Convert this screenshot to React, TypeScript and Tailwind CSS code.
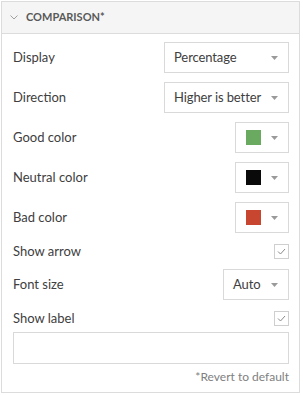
import React from 'react'

const font = { fontFamily: 'Lato, "Noto Sans", sans-serif' }

function Caret() {
  return (
    <svg width="7" height="4" viewBox="0 0 7 4" className="shrink-0">
      <path d="M0 0 L7 0 L3.5 4 Z" fill="#9a9a9a" />
    </svg>
  )
}

function Select({ value, width }: { value: string; width: string }) {
  return (
    <div className={`${width} h-[31px] flex items-center justify-between border border-[#d9d9d9] bg-white pl-[9px] pr-[10px]`}>
      <span className="text-[13px] tracking-[-0.1px] text-[#404040] whitespace-nowrap">{value}</span>
      <Caret />
    </div>
  )
}

function Swatch({ color }: { color: string }) {
  return (
    <div className="w-[54px] h-[31px] flex items-center justify-between border border-[#d9d9d9] bg-white pl-[10px] pr-[10px]">
      <span className={`w-[15px] h-[15px] ${color}`} />
      <Caret />
    </div>
  )
}

function Check() {
  return (
    <div className="w-[15px] h-[15px] border border-[#cfcfcf] bg-white flex items-center justify-center">
      <svg width="9" height="7" viewBox="0 0 9 7">
        <path d="M1 3.5 L3.5 6 L8 1" fill="none" stroke="#8a8a8a" strokeWidth="1" />
      </svg>
    </div>
  )
}

function Row({ label, children }: { label: string; children: React.ReactNode }) {
  return (
    <div className="flex items-center justify-between h-[31px]">
      <span className="text-[13px] text-[#404040]">{label}</span>
      {children}
    </div>
  )
}

function CheckRow({ label }: { label: string }) {
  return (
    <div className="flex items-center justify-between h-[17px]">
      <span className="text-[13px] text-[#404040]">{label}</span>
      <Check />
    </div>
  )
}

export default function App() {
  return (
    <div className="w-[303px] h-[395px] bg-white pt-px pl-px">
      <div className="w-[299px] h-[392px] border border-[#dcdcdc] flex flex-col" style={font}>
        <div className="h-[32px] bg-[#f5f5f5] border-b border-[#dcdcdc] flex items-center pl-[8px] gap-[8px]">
          <svg width="8" height="5" viewBox="0 0 8 5">
            <path d="M0.5 0.5 L4 4 L7.5 0.5" fill="none" stroke="#a0a0a0" strokeWidth="1" />
          </svg>
          <span className="text-[11px] font-bold text-[#595959]">COMPARISON*</span>
        </div>
        <div className="flex flex-col pl-[11px] pr-[10px] pt-[8px]">
          <div className="flex flex-col gap-[9px]">
            <Row label="Display"><Select value="Percentage" width="w-[125px]" /></Row>
            <Row label="Direction"><Select value="Higher is better" width="w-[125px]" /></Row>
            <Row label="Good color"><Swatch color="bg-[#6aa960]" /></Row>
            <Row label="Neutral color"><Swatch color="bg-[#0a0a0a]" /></Row>
            <Row label="Bad color"><Swatch color="bg-[#c84630]" /></Row>
          </div>
          <div className="mt-[10px]"><CheckRow label="Show arrow" /></div>
          <div className="mt-[9px]"><Row label="Font size"><Select value="Auto" width="w-[66px]" /></Row></div>
          <div className="mt-[10px]"><CheckRow label="Show label" /></div>
          <div className="mt-[5px] h-[32px] border border-[#d9d9d9] bg-white" />
          <div className="mt-[4px] text-right text-[12px] text-[#808080]">*Revert to default</div>
        </div>
      </div>
    </div>
  )
}
